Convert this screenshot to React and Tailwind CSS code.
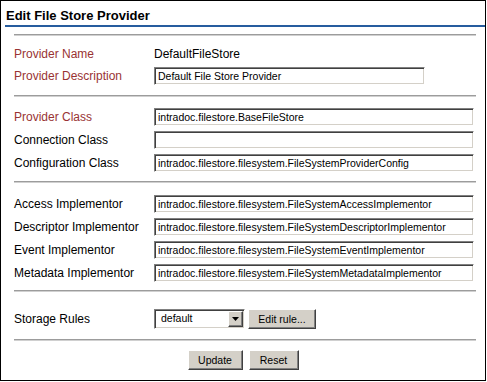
const field =
  "h-[18px] border border-t-[#808080] border-l-[#808080] border-r-white border-b-white bg-white shadow-[inset_1px_1px_0_#404040,inset_-1px_-1px_0_#d4d0c8] px-[3px] text-[10.5px] text-black outline-none font-['Liberation_Sans',Arial,sans-serif]"

const btn =
  "h-[20px] bg-[#d4d0c8] border border-t-white border-l-white border-r-[#404040] border-b-[#404040] shadow-[inset_-1px_-1px_0_#808080] text-[10.5px] text-black leading-none flex items-center justify-center"

function Rule({ className = "" }) {
  return <div className={"ml-[13px] mr-[9px] h-[2px] border-t border-t-[#9c9c9c] border-b border-b-[#d0d0d0] " + className} />
}

function Row({ label, red, value, width = "w-[320px]" }) {
  return (
    <div className="flex items-center h-[18px]">
      <div className={"w-[140px] text-[12px] leading-[14px] " + (red ? "text-[#993333]" : "text-black")}>{label}</div>
      <input readOnly defaultValue={value} className={field + " " + width} />
    </div>
  )
}

export default function App() {
  return (
    <div className="w-[486px] h-[381px] border border-black bg-white font-['Liberation_Sans',Arial,sans-serif]">
      <div className="pt-[7px] pl-[5px] text-[13px] font-bold leading-[16px] text-black">Edit File Store Provider</div>
      <div className="mt-[1px] ml-[4px] h-[2px] bg-[#265c9e]" />

      <Rule className="mt-[7px]" />
      <div className="pl-[13px] pt-[8px]">
        <div className="flex items-center h-[20px] text-[12px]">
          <div className="w-[140px] text-[#993333]">Provider Name</div>
          <div className="text-black">DefaultFileStore</div>
        </div>
        <div className="mt-[3px]">
          <Row label="Provider Description" red value="Default File Store Provider" width="w-[271px]" />
        </div>
      </div>

      <Rule className="mt-[10px]" />
      <div className="pl-[13px] pt-[11px] flex flex-col gap-[5px]">
        <Row label="Provider Class" red value="intradoc.filestore.BaseFileStore" />
        <Row label="Connection Class" value="" />
        <Row label="Configuration Class" value="intradoc.filestore.filesystem.FileSystemProviderConfig" />
      </div>

      <Rule className="mt-[9px]" />
      <div className="pl-[13px] pt-[12px] flex flex-col gap-[5px]">
        <Row label="Access Implementor" value="intradoc.filestore.filesystem.FileSystemAccessImplementor" />
        <Row label="Descriptor Implementor" value="intradoc.filestore.filesystem.FileSystemDescriptorImplementor" />
        <Row label="Event Implementor" value="intradoc.filestore.filesystem.FileSystemEventImplementor" />
        <Row label="Metadata Implementor" value="intradoc.filestore.filesystem.FileSystemMetadataImplementor" />
      </div>

      <Rule className="mt-[8px]" />
      <div className="pl-[13px] pt-[17px] flex items-center h-[37px]">
        <div className="w-[140px] text-[12px] text-black">Storage Rules</div>
        <div className="w-[91px] h-[20px] flex items-center border border-t-[#808080] border-l-[#808080] border-r-white border-b-white bg-white shadow-[inset_1px_1px_0_#404040,inset_-1px_-1px_0_#d4d0c8] p-[1px]">
          <div className="flex-1 pl-[5px] text-[10.5px] text-black">default</div>
          <div className="w-[15px] h-[16px] bg-[#d4d0c8] border border-t-white border-l-white border-r-[#404040] border-b-[#404040] shadow-[inset_-1px_-1px_0_#808080] flex items-center justify-center">
            <svg width="7" height="4" viewBox="0 0 7 4">
              <path d="M0 0h7L3.5 4z" fill="#000" />
            </svg>
          </div>
        </div>
        <button className={btn + " ml-[3px] w-[68px]"}>Edit rule...</button>
      </div>

      <Rule className="mt-[10px]" />
      <div className="pt-[9px] flex justify-center gap-[6px]">
        <button className={btn + " w-[55px]"}>Update</button>
        <button className={btn + " w-[50px]"}>Reset</button>
      </div>
    </div>
  )
}
